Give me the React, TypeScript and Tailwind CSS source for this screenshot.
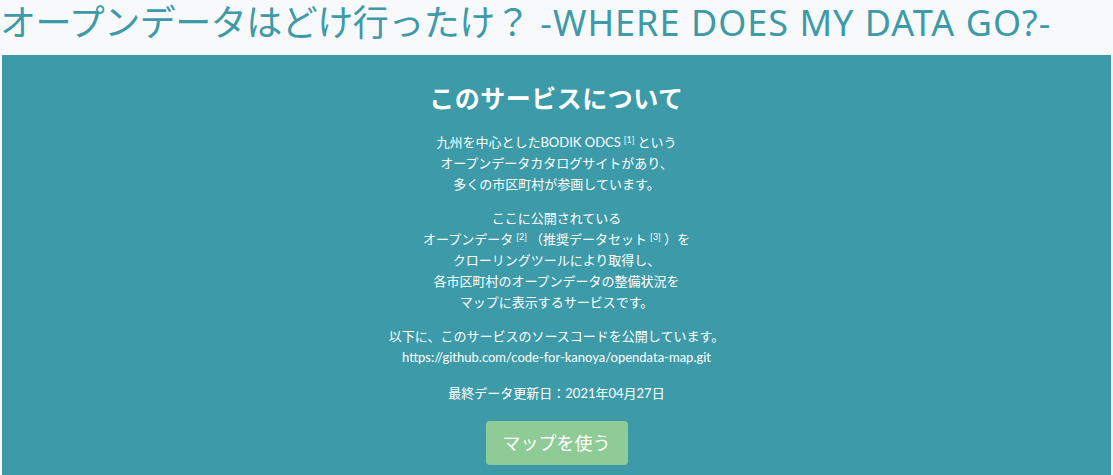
import React from "react";

const Ref = ({ n }: { n: number }) => (
  <span className="relative -top-[4px] text-[9px] leading-none mx-[3px]">[{n}]</span>
);

export default function App() {
  return (
    <div className="min-h-screen bg-[#f8f9fb] font-['Noto_Sans','Noto_Sans_CJK_JP',sans-serif]">
      <h1 className="h-[55px] text-[36px] leading-[46px] text-[#3d9aa8] whitespace-nowrap tracking-[-0.5px]">
        オープンデータはどけ行ったけ？
        <span className="ml-[10px] tracking-[1px]">-WHERE DOES MY DATA GO?-</span>
      </h1>
      <section className="mx-[2px] bg-[#3d9aa8] text-white text-center pt-7 pb-10">
        <h2 className="text-[25px] leading-[30px] font-bold tracking-[0.5px]">このサービスについて</h2>
        <div className="mt-[19px] text-[13px] leading-[21px] font-['Lato','Noto_Sans_CJK_JP',sans-serif]">
          <p>
            九州を中心としたBODIK ODCS<Ref n={1} />という
            <br />
            オープンデータカタログサイトがあり、
            <br />
            多くの市区町村が参画しています。
          </p>
          <p className="mt-[13px]">
            ここに公開されている
            <br />
            オープンデータ<Ref n={2} />（推奨データセット<Ref n={3} />）を
            <br />
            クローリングツールにより取得し、
            <br />
            各市区町村のオープンデータの整備状況を
            <br />
            マップに表示するサービスです。
          </p>
          <p className="mt-[13px]">
            以下に、このサービスのソースコードを公開しています。
            <br />
            https://github.com/code-for-kanoya/opendata-map.git
          </p>
          <p className="mt-[15px]">最終データ更新日：2021年04月27日</p>
        </div>
        <button className="mt-[17px] w-[142px] h-[44px] rounded-[4px] bg-[#8fcb96] text-white text-[18px]">
          マップを使う
        </button>
      </section>
    </div>
  );
}
